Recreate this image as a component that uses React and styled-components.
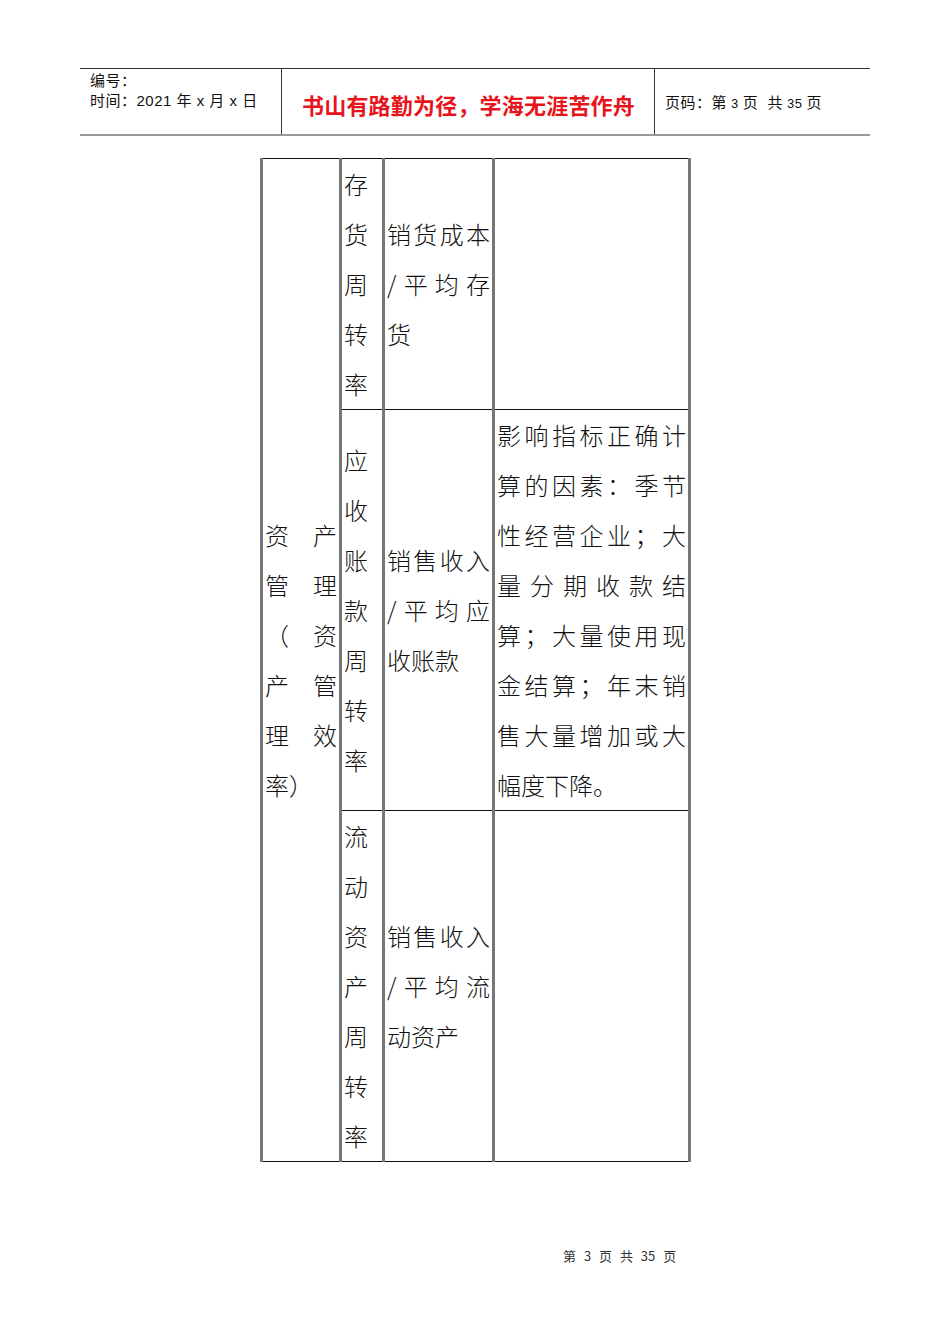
import React from "react";
import styled, { createGlobalStyle } from "styled-components";

const GlobalStyle = createGlobalStyle`
  html, body {
    margin: 0;
    padding: 0;
    background: #fff;
  }
  body {
    font-family: "Noto Sans CJK SC", "Liberation Sans", sans-serif;
    color: #000;
  }
`;

const Page = styled.div`
  width: 950px;
  min-height: 1344px;
  padding-top: 68px;
  box-sizing: border-box;
`;

const Header = styled.div`
  margin-left: 80px;
  width: 790px;
  height: 68px;
  display: grid;
  grid-template-columns: 201px 373px 216px;
  border-top: 1px solid #333;
  border-bottom: 2px solid #999;
  box-sizing: border-box;
`;

const HeaderCell = styled.div`
  display: flex;
  flex-direction: column;
  justify-content: ${(p) => (p.$top ? "flex-start" : "center")};
  padding: ${(p) => (p.$top ? "2px 0 0 10px" : "4px 0 0 " + (p.$pad || 10) + "px")};
  border-left: ${(p) => (p.$divider ? "1px solid #333" : "none")};
  font-family: "Liberation Sans", "Noto Sans CJK SC", sans-serif;
  font-size: 15px;
  line-height: 20px;
  letter-spacing: 0.5px;
  color: #111;
`;

const Motto = styled.div`
  font-family: "Noto Sans CJK SC", sans-serif;
  font-size: 22px;
  font-weight: 700;
  color: #e8141c;
  letter-spacing: 0.2px;
`;

const Small = styled.span`
  font-size: 13px;
  margin: 0 4px;
`;

const Table = styled.table`
  margin: 22px 0 0 260px;
  border-collapse: collapse;
  table-layout: fixed;
  width: 428px;
`;

const Cell = styled.td`
  border-left: 3px solid #777;
  border-right: 3px solid #777;
  border-top: 1px solid #111;
  border-bottom: 1px solid #111;
  padding: 0 2px;
  vertical-align: middle;
  font-size: 24px;
  line-height: 50px;
  font-weight: 300;
  color: #111;
`;

const Line = styled.span`
  display: block;
  white-space: nowrap;
  text-align: ${(p) => (p.$last ? "left" : "justify")};
  text-align-last: ${(p) => (p.$last ? "left" : "justify")};
`;

const Footer = styled.div`
  margin: 84px 0 0 563px;
  font-size: 13px;
  color: #333;
  word-spacing: 5px;
`;

const Lines = ({ items }) =>
  items.map((t, i) => (
    <Line key={i} $last={i === items.length - 1}>
      {t}
    </Line>
  ));

const rows = [
  {
    name: ["存", "货", "周", "转", "率"],
    formula: ["销货成本", "/平均存", "货"],
    note: null,
  },
  {
    name: ["应", "收", "账", "款", "周", "转", "率"],
    formula: ["销售收入", "/平均应", "收账款"],
    note: [
      "影响指标正确计",
      "算的因素：季节",
      "性经营企业；大",
      "量分期收款结",
      "算；大量使用现",
      "金结算；年末销",
      "售大量增加或大",
      "幅度下降。",
    ],
  },
  {
    name: ["流", "动", "资", "产", "周", "转", "率"],
    formula: ["销售收入", "/平均流", "动资产"],
    note: null,
  },
];

const App = () => (
  <Page lang="zh-CN">
    <GlobalStyle />
    <Header>
      <HeaderCell $top>
        <div>编号：</div>
        <div>时间：2021 年 x 月 x 日</div>
      </HeaderCell>
      <HeaderCell $divider $pad={20}>
        <Motto>书山有路勤为径，学海无涯苦作舟</Motto>
      </HeaderCell>
      <HeaderCell $divider>
        <div>
          页码：第<Small>3</Small>页&nbsp;&nbsp;共<Small>35</Small>页
        </div>
      </HeaderCell>
    </Header>

    <Table>
      <colgroup>
        <col style={{ width: 79 }} />
        <col style={{ width: 43 }} />
        <col style={{ width: 110 }} />
        <col style={{ width: 196 }} />
      </colgroup>
      <tbody>
        {rows.map((r, i) => (
          <tr key={i}>
            {i === 0 && (
              <Cell rowSpan={3}>
                <Lines items={["资产", "管理", "（资", "产管", "理效", "率）"]} />
              </Cell>
            )}
            <Cell>
              <Lines items={r.name} />
            </Cell>
            <Cell>
              <Lines items={r.formula} />
            </Cell>
            <Cell>{r.note && <Lines items={r.note} />}</Cell>
          </tr>
        ))}
      </tbody>
    </Table>

    <Footer>第 3 页 共 35 页</Footer>
  </Page>
);

export default App;
